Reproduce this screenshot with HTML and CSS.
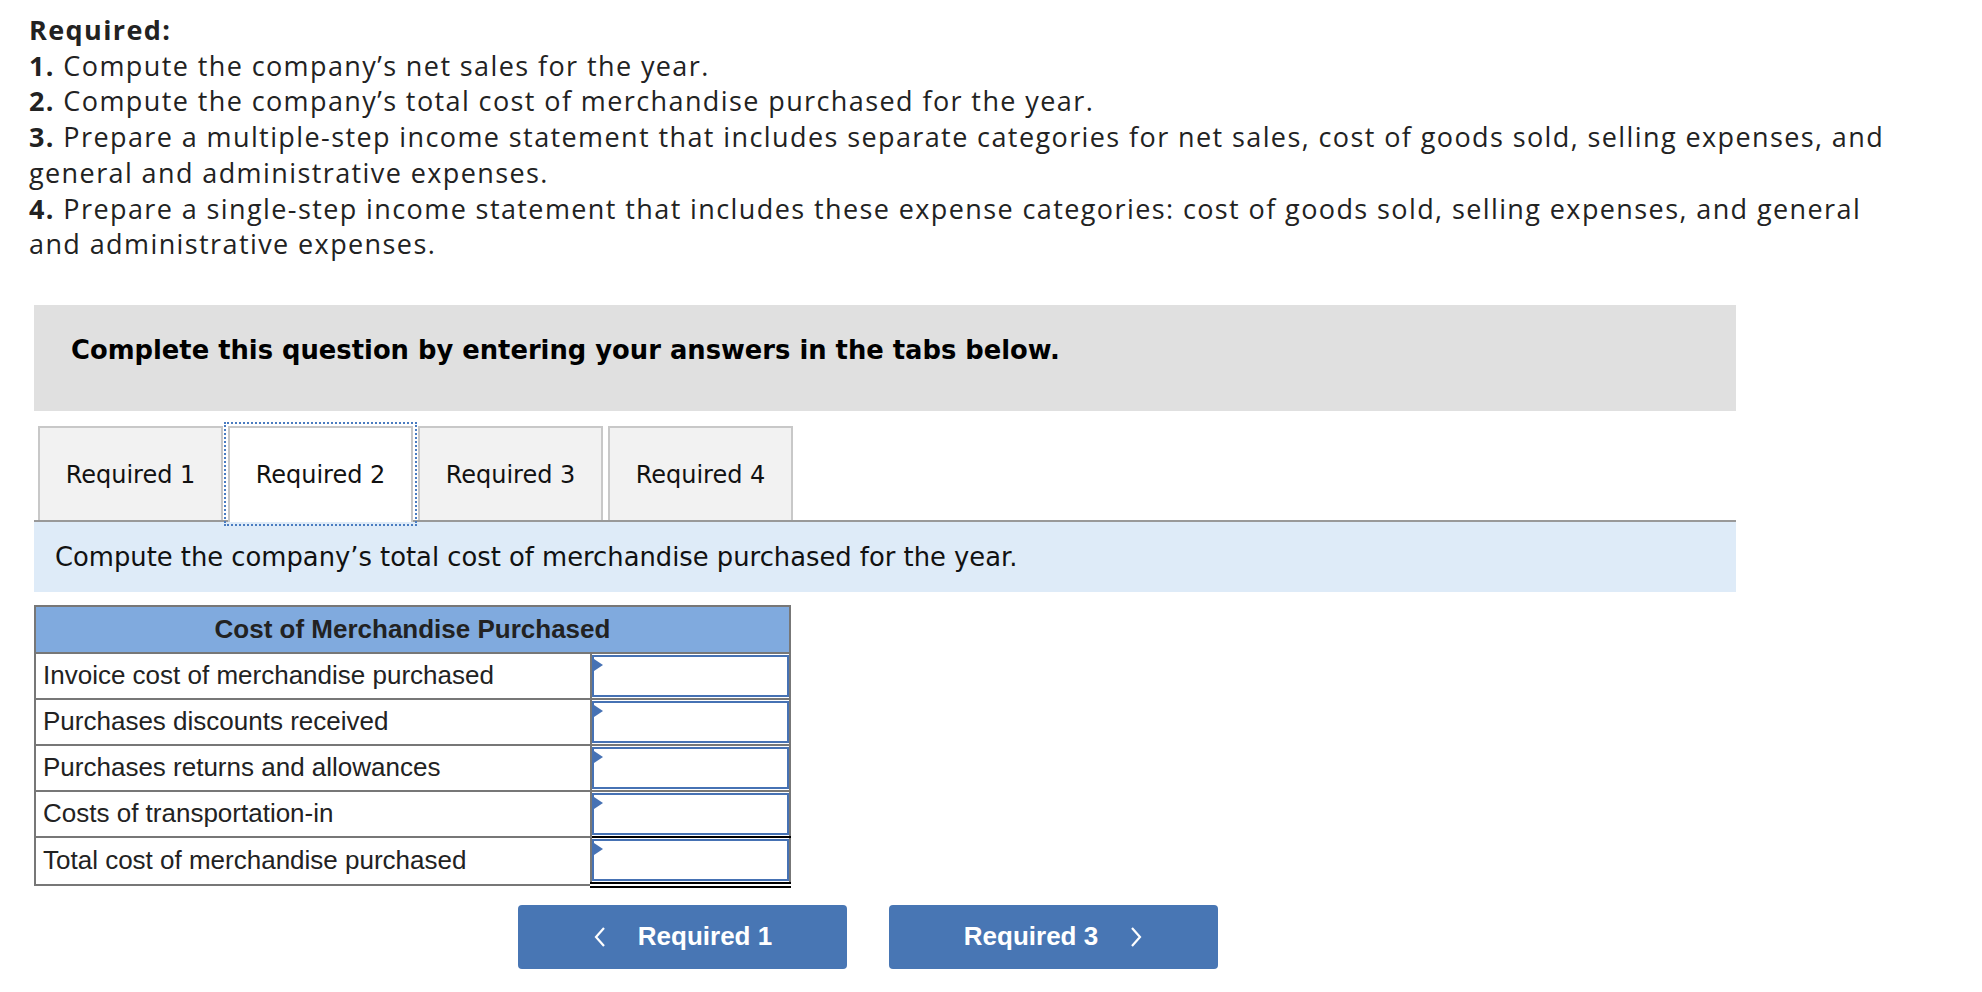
FILE: index.html
```html
<!DOCTYPE html>
<html lang="en">
<head>
<meta charset="utf-8">
<title>Cost of Merchandise Purchased</title>
<link rel="stylesheet" href="styles.css">
</head>
<body>
<div class="page">
  <div class="required">
    <p class="req-title">Required:</p>
    <p><b>1.</b> Compute the company’s net sales for the year.</p>
    <p><b>2.</b> Compute the company’s total cost of merchandise purchased for the year.</p>
    <p><b>3.</b> Prepare a multiple-step income statement that includes separate categories for net sales, cost of goods sold, selling expenses, and general and administrative expenses.</p>
    <p><b>4.</b> Prepare a single-step income statement that includes these expense categories: cost of goods sold, selling expenses, and general and administrative expenses.</p>
  </div>

  <section class="question">
    <div class="instructions">Complete this question by entering your answers in the tabs below.</div>

    <div class="tabs">
      <div class="tab">Required 1</div>
      <div class="tab active">Required 2</div>
      <div class="tab">Required 3</div>
      <div class="tab">Required 4</div>
    </div>

    <div class="prompt">Compute the company’s total cost of merchandise purchased for the year.</div>

    <table class="cmp">
      <thead>
        <tr><th colspan="2">Cost of Merchandise Purchased</th></tr>
      </thead>
      <tbody>
        <tr><td class="label">Invoice cost of merchandise purchased</td><td class="input"><div class="field"></div></td></tr>
        <tr><td class="label">Purchases discounts received</td><td class="input"><div class="field"></div></td></tr>
        <tr><td class="label">Purchases returns and allowances</td><td class="input"><div class="field"></div></td></tr>
        <tr><td class="label">Costs of transportation-in</td><td class="input single"><div class="field"></div></td></tr>
        <tr><td class="label">Total cost of merchandise purchased</td><td class="input double"><div class="field"></div></td></tr>
      </tbody>
    </table>

    <div class="nav">
      <button class="btn">
        <svg class="chev" width="14" height="22" viewBox="0 0 14 22"><polyline points="11,2 3,11 11,20" fill="none" stroke="#fff" stroke-width="2.2"/></svg>
        <span>Required 1</span>
      </button>
      <button class="btn">
        <span>Required 3</span>
        <svg class="chev" width="14" height="22" viewBox="0 0 14 22"><polyline points="3,2 11,11 3,20" fill="none" stroke="#fff" stroke-width="2.2"/></svg>
      </button>
    </div>
  </section>
</div>
</body>
</html>
```

FILE: styles.css
```css
* { box-sizing: border-box; }

body {
  margin: 0;
  background: #ffffff;
}

.page {
  padding: 12px 0 0 29px;
}

.required {
  width: 1885px;
  font-family: "Open Sans", Lato, sans-serif;
  font-size: 27px;
  letter-spacing: 1.4px;
  line-height: 35.7px;
  color: #222222;
}

.required p {
  margin: 0;
}

.required b,
.req-title {
  font-weight: 700;
}

.question {
  margin: 43px 0 0 5px;
  width: 1702px;
}

.instructions {
  background: #e0e0e0;
  height: 106px;
  padding: 31px 0 0 37px;
  font-family: "DejaVu Sans", Verdana, sans-serif;
  font-weight: bold;
  font-size: 25.8px;
  line-height: 29px;
  color: #000000;
}

.tabs {
  display: flex;
  gap: 5px;
  margin-top: 15px;
  padding-left: 4px;
  border-bottom: 2px solid #999999;
}

.tab {
  width: 185px;
  height: 94px;
  padding-top: 3px;
  border: 2px solid #c8c8c8;
  border-bottom: 0;
  background: #f2f2f2;
  display: flex;
  align-items: center;
  justify-content: center;
  font-family: "DejaVu Sans", Verdana, sans-serif;
  font-size: 24px;
  color: #111111;
}

.tab.active {
  background: #ffffff;
  height: 96px;
  margin-bottom: -2px;
  padding-bottom: 2px;
  outline: 2px dotted #4a7cc0;
  outline-offset: 2px;
}

.prompt {
  background: #deebf8;
  height: 70px;
  padding-left: 21px;
  display: flex;
  align-items: center;
  font-family: "DejaVu Sans", Verdana, sans-serif;
  font-size: 25.8px;
  color: #111111;
}

.cmp {
  margin-top: 13px;
  width: 757px;
  border-collapse: collapse;
  border: 2px solid #777777;
  font-family: "Liberation Sans", Arial, sans-serif;
  font-size: 26px;
  color: #222222;
}

.cmp th {
  height: 47px;
  padding: 0;
  background: #80aade;
  border: 2px solid #777777;
  font-weight: bold;
  text-align: center;
}

.cmp td {
  height: 44px;
  padding: 0;
  border: 2px solid #777777;
}

.cmp td.label {
  width: 556px;
  padding-left: 7px;
}

.cmp td.input {
  padding: 1px 0 1px 0;
  vertical-align: top;
}

.cmp td.single {
  border-bottom: 2px solid #000000;
}

.cmp td.double {
  border-bottom: 6px double #000000;
}

.field {
  position: relative;
  height: 42px;
  border: 2px solid #4672b4;
  background: #ffffff;
}

.field::before {
  content: "";
  position: absolute;
  left: 0;
  top: 2px;
  border-left: 9px solid #4672b4;
  border-top: 6px solid transparent;
  border-bottom: 6px solid transparent;
}

.nav {
  display: flex;
  gap: 42px;
  margin-top: 17px;
  padding-left: 484px;
}

.btn {
  width: 329px;
  height: 64px;
  border: 0;
  border-radius: 4px;
  background: #4876b4;
  color: #ffffff;
  display: flex;
  align-items: center;
  justify-content: center;
  gap: 31px;
  font-family: "Liberation Sans", Arial, sans-serif;
  font-weight: bold;
  font-size: 26px;
}

.chev {
  display: block;
}
```
